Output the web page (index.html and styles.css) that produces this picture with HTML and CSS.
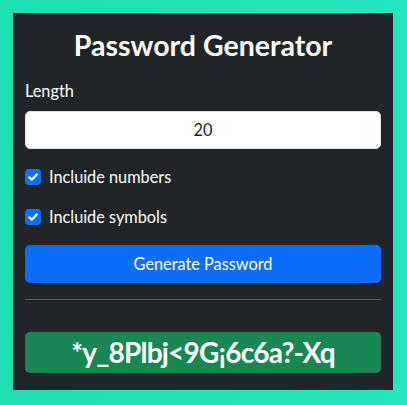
FILE: index.html
```html
<!DOCTYPE html>
<html lang="en">
<head>
<meta charset="utf-8">
<title>Password Generator</title>
<link rel="stylesheet" href="styles.css">
</head>
<body>
<main class="card">
  <h1 class="title">Password Generator</h1>
  <label class="label" for="len">Length</label>
  <input class="input" id="len" type="text" value="20">
  <label class="check">
    <span class="box"><svg viewBox="0 0 16 16" width="16" height="16"><path d="M4.2 8.3l2.6 2.5 5-5.3" fill="none" stroke="#fff" stroke-width="2.2" stroke-linecap="round" stroke-linejoin="round"/></svg></span>
    <span>Incluide numbers</span>
  </label>
  <label class="check">
    <span class="box"><svg viewBox="0 0 16 16" width="16" height="16"><path d="M4.2 8.3l2.6 2.5 5-5.3" fill="none" stroke="#fff" stroke-width="2.2" stroke-linecap="round" stroke-linejoin="round"/></svg></span>
    <span>Incluide symbols</span>
  </label>
  <button class="btn" type="button">Generate Password</button>
  <hr class="rule">
  <div class="result">*y_8Plbj&lt;9G¡6c6a?-Xq</div>
</main>
</body>
</html>
```
FILE: styles.css
```css
* { box-sizing: border-box; }
html, body { margin: 0; padding: 0; }
body {
  width: 407px;
  height: 405px;
  background: linear-gradient(90deg, #1fe0b3, #22e6bc);
  padding: 13px 14px 15px 13px;
  font-family: "Lato", "Open Sans", sans-serif;
  color: #fff;
}
.card {
  background: #212529;
  width: 380px;
  height: 377px;
  padding: 16px 12px;
  display: flex;
  flex-direction: column;
}
.title {
  margin: 0 0 16px;
  font-size: 28.5px;
  line-height: 33.6px;
  font-weight: 700;
  text-align: center;
}
.label {
  font-size: 16.3px;
  line-height: 24px;
  margin-bottom: 8px;
}
.input {
  height: 38px;
  border: 1px solid #dee2e6;
  border-radius: 5px;
  background: #fff;
  text-align: center;
  font: 16.3px/24px "Lato", sans-serif;
  color: #212529;
  padding: 6px 12px;
  margin-bottom: 16px;
}
.check {
  display: flex;
  align-items: flex-start;
  gap: 8px;
  font-size: 16.3px;
  line-height: 24px;
  margin-bottom: 16px;
}
.box {
  width: 16px;
  height: 16px;
  margin-top: 4px;
  background: #0d6efd;
  border-radius: 4px;
  display: flex;
}
.btn {
  height: 38px;
  border: 0;
  border-radius: 5px;
  background: #0d6efd;
  color: #fff;
  font: 16.3px/24px "Lato", sans-serif;
  padding: 6px 12px;
}
.rule {
  margin: 16px 0 32px;
  border: 0;
  border-top: 1px solid #5a5d61;
}
.result {
  background: #198754;
  border-radius: 5px;
  padding: 4px 12px;
  font-size: 28px;
  line-height: 33.6px;
  font-weight: 700;
  letter-spacing: -0.8px;
  text-align: center;
}
```
